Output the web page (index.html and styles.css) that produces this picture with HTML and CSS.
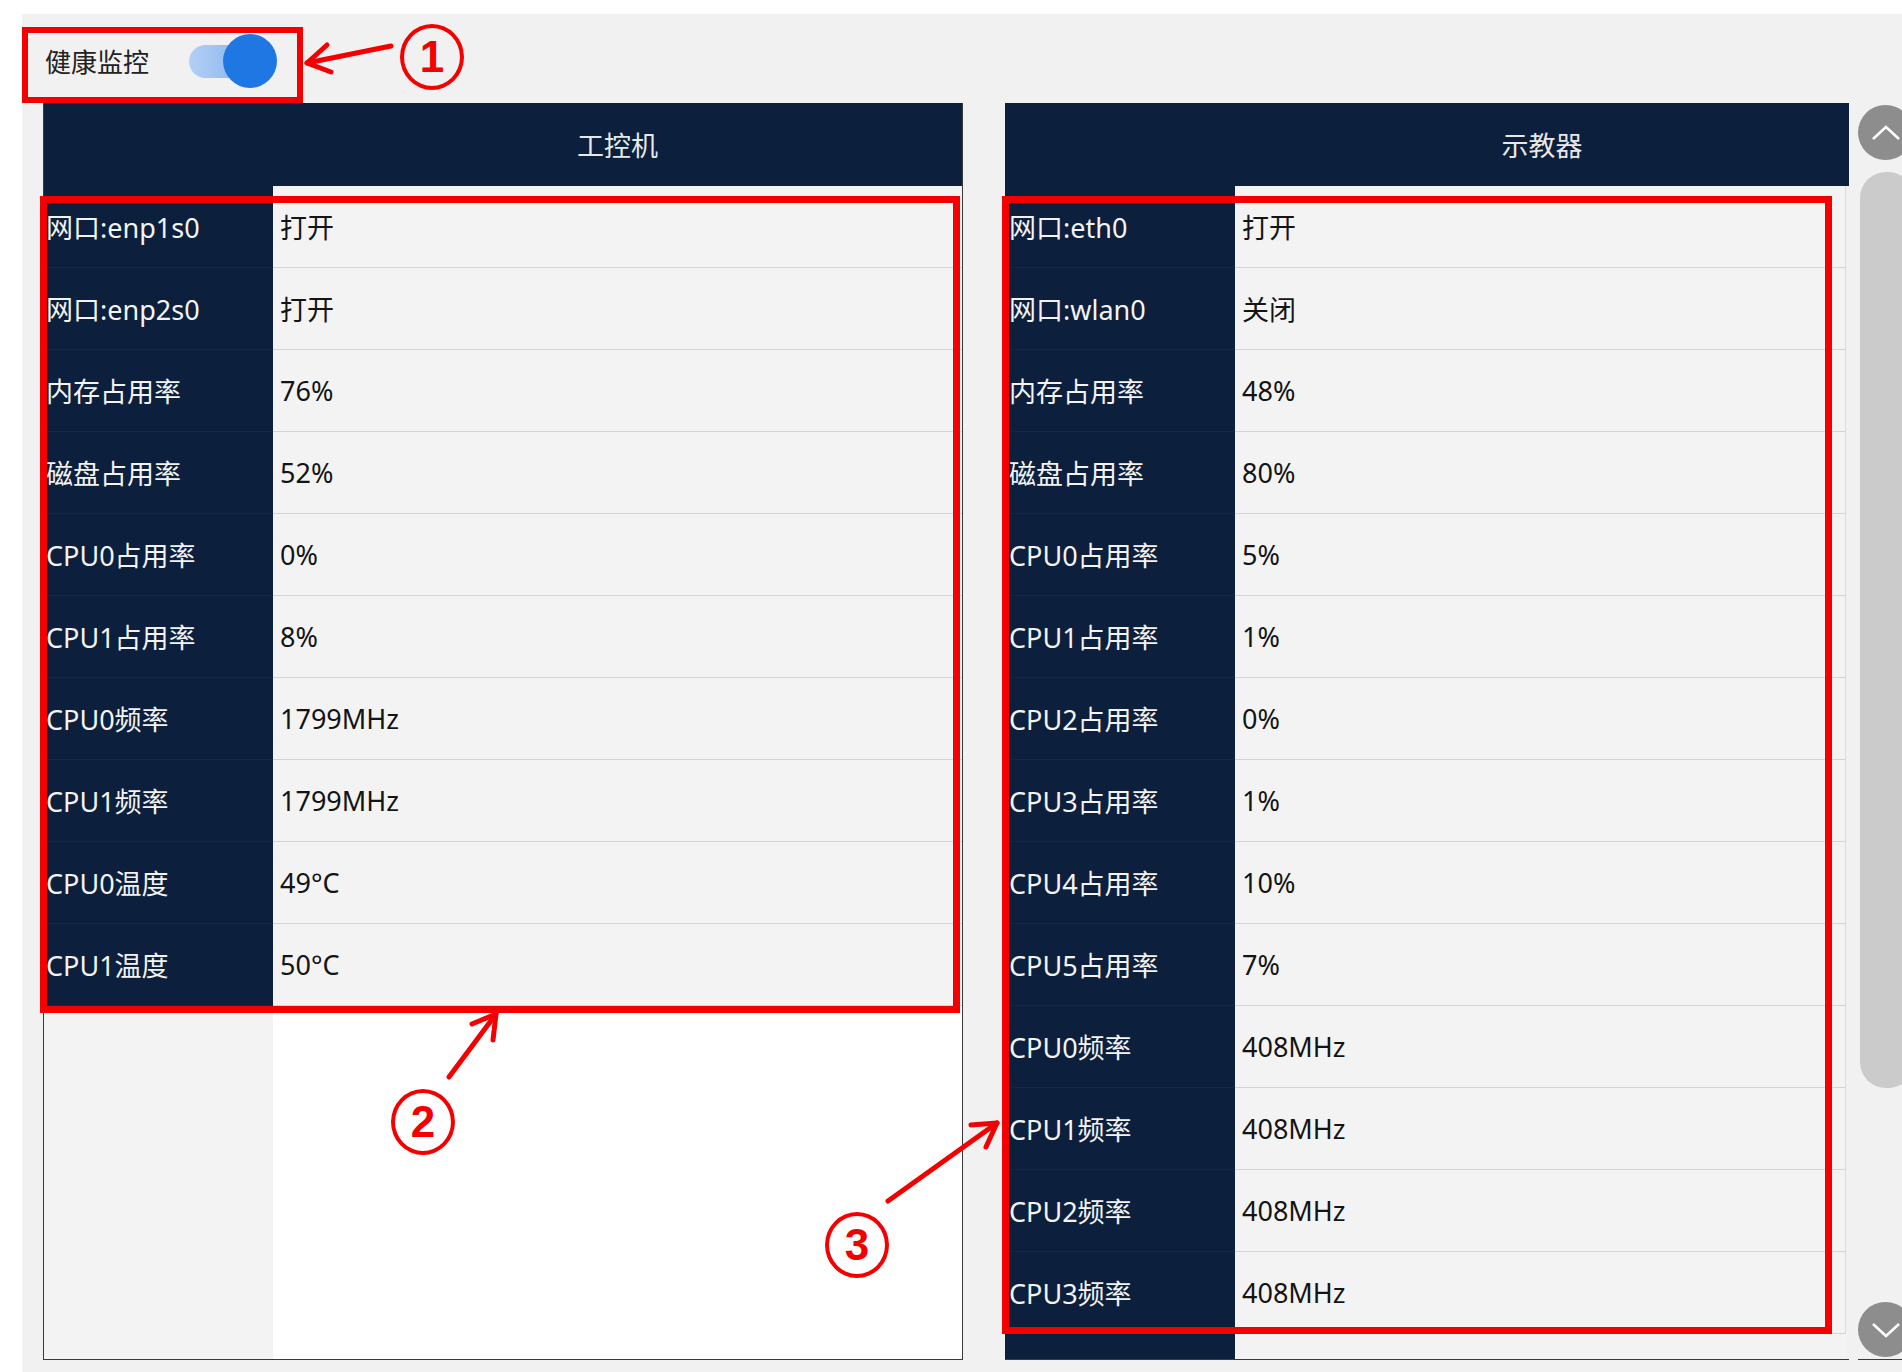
FILE: index.html
```html
<!DOCTYPE html>
<html>
<head>
  <meta charset="UTF-8">
  <title>健康监控</title>
  <link rel="stylesheet" href="styles.css">
</head>
<body>
  <div class="app">
    <div class="toolbar">
      <span class="toolbar-label">健康监控</span>
      <div class="switch">
        <div class="switch-track"></div>
        <div class="switch-knob"></div>
      </div>
    </div>

    <div class="panels">
      <!-- 工控机 -->
      <div class="panel panel-left">
        <div class="panel-header">工控机</div>
        <div class="row"><div class="row-label">网口:enp1s0</div><div class="row-value">打开</div></div>
        <div class="row"><div class="row-label">网口:enp2s0</div><div class="row-value">打开</div></div>
        <div class="row"><div class="row-label">内存占用率</div><div class="row-value">76%</div></div>
        <div class="row"><div class="row-label">磁盘占用率</div><div class="row-value">52%</div></div>
        <div class="row"><div class="row-label">CPU0占用率</div><div class="row-value">0%</div></div>
        <div class="row"><div class="row-label">CPU1占用率</div><div class="row-value">8%</div></div>
        <div class="row"><div class="row-label">CPU0频率</div><div class="row-value">1799MHz</div></div>
        <div class="row"><div class="row-label">CPU1频率</div><div class="row-value">1799MHz</div></div>
        <div class="row"><div class="row-label">CPU0温度</div><div class="row-value">49°C</div></div>
        <div class="row"><div class="row-label">CPU1温度</div><div class="row-value">50°C</div></div>
        <div class="filler">
          <div class="filler-label"></div>
          <div class="filler-value"></div>
        </div>
      </div>

      <!-- 示教器 -->
      <div class="panel panel-right">
        <div class="panel-header">示教器</div>
        <div class="row"><div class="row-label">网口:eth0</div><div class="row-value">打开</div></div>
        <div class="row"><div class="row-label">网口:wlan0</div><div class="row-value">关闭</div></div>
        <div class="row"><div class="row-label">内存占用率</div><div class="row-value">48%</div></div>
        <div class="row"><div class="row-label">磁盘占用率</div><div class="row-value">80%</div></div>
        <div class="row"><div class="row-label">CPU0占用率</div><div class="row-value">5%</div></div>
        <div class="row"><div class="row-label">CPU1占用率</div><div class="row-value">1%</div></div>
        <div class="row"><div class="row-label">CPU2占用率</div><div class="row-value">0%</div></div>
        <div class="row"><div class="row-label">CPU3占用率</div><div class="row-value">1%</div></div>
        <div class="row"><div class="row-label">CPU4占用率</div><div class="row-value">10%</div></div>
        <div class="row"><div class="row-label">CPU5占用率</div><div class="row-value">7%</div></div>
        <div class="row"><div class="row-label">CPU0频率</div><div class="row-value">408MHz</div></div>
        <div class="row"><div class="row-label">CPU1频率</div><div class="row-value">408MHz</div></div>
        <div class="row"><div class="row-label">CPU2频率</div><div class="row-value">408MHz</div></div>
        <div class="row"><div class="row-label">CPU3频率</div><div class="row-value">408MHz</div></div>
        <div class="filler filler-dark">
          <div class="filler-label"></div>
          <div class="filler-value"></div>
        </div>
      </div>

      <div class="scroller">
        <div class="scroll-btn">
          <svg width="30" height="18" viewBox="0 0 30 18"><polyline points="2,15 15,3 28,15" fill="none" stroke="#fff" stroke-width="2.5"/></svg>
        </div>
        <div class="scroll-thumb"></div>
        <div class="scroll-btn scroll-btn-down">
          <svg width="30" height="18" viewBox="0 0 30 18"><polyline points="2,3 15,15 28,3" fill="none" stroke="#fff" stroke-width="2.5"/></svg>
        </div>
      </div>
    </div>
  </div>

  <!-- red call-outs drawn on top -->
  <div class="marks">
    <div class="mark-box mark-box-1"></div>
    <div class="mark-box mark-box-2"></div>
    <div class="mark-box mark-box-3"></div>
    <div class="mark-num mark-num-1">1</div>
    <div class="mark-num mark-num-2">2</div>
    <div class="mark-num mark-num-3">3</div>
    <svg class="mark-arrows" width="1902" height="1372" viewBox="0 0 1902 1372">
      <g fill="none" stroke="#f50000" stroke-width="5" stroke-linecap="round" stroke-linejoin="round">
        <line x1="391" y1="46" x2="307" y2="63"/>
        <polyline points="331,72 307,63 327,45"/>
        <line x1="449" y1="1077" x2="496" y2="1014"/>
        <polyline points="493,1040 496,1014 472,1024"/>
        <line x1="888" y1="1201" x2="997" y2="1123"/>
        <polyline points="986,1147 997,1123 971,1125"/>
      </g>
    </svg>
  </div>
</body>
</html>
```

FILE: styles.css
```css
body {
  margin: 0;
  background: #fff;
  font-family: "Noto Sans", "Noto Sans CJK SC", sans-serif;
  position: relative;
  height: 1372px;
  overflow: hidden;
}
.app {
  margin: 14px 0 0 22px;
  background: #f1f1f1;
  height: 1358px;
  overflow: hidden;
}
.toolbar {
  height: 85px;
  padding-top: 4px;
  padding-left: 23px;
  display: flex;
  align-items: center;
  gap: 40px;
}
.toolbar-label {
  font-size: 26px;
  color: #222;
}
.switch {
  position: relative;
  width: 88px;
  height: 54px;
}
.switch-track {
  position: absolute;
  left: 0;
  top: 11px;
  width: 72px;
  height: 33px;
  border-radius: 17px;
  background: linear-gradient(90deg, #b3d0f5, #7eaeed);
}
.switch-knob {
  position: absolute;
  right: 0;
  top: 0;
  width: 54px;
  height: 54px;
  border-radius: 50%;
  background: #1f77e3;
}

.panels {
  display: flex;
  padding-left: 21px;
  height: 1257px;
}
.panel {
  display: flex;
  flex-direction: column;
  flex: none;
  font-size: 27px;
}
.panel-left {
  width: 918px;
  border: 1px solid #3a3a3a;
  border-top: 0;
  margin-right: 42px;
}
.panel-right {
  width: 844px;
  border-bottom: 1px solid #3a3a3a;
}
/* title sits over the value column */
.panel-header {
  height: 83px;
  flex: none;
  padding-left: 229px;
  background: #0c1f3c;
  color: #e8e8e8;
  display: flex;
  align-items: center;
  justify-content: center;
}
.panel-right .panel-header {
  padding-left: 230px;
}
.row {
  display: flex;
  height: 82px;
  flex: none;
}
.row-label {
  width: 227px;
  padding-left: 2px;
  background: #0c1f3c;
  color: #f3f3f3;
  display: flex;
  align-items: center;
  border-bottom: 1px solid #12284a;
}
.panel-right .row-label {
  width: 226px;
  padding-left: 4px;
}
.row-value {
  flex: 1;
  padding-left: 7px;
  background: #f3f3f3;
  color: #141414;
  display: flex;
  align-items: center;
  border-bottom: 1px solid #d4d4d4;
}
.panel-right .row-value {
  border-right: 1px solid #dcdcdc;
  margin-right: 3px;
}
.filler {
  flex: 1;
  display: flex;
}
.filler-label {
  width: 229px;
  background: #f3f3f3;
}
.filler-value {
  flex: 1;
  background: #fff;
}
.filler-dark .filler-label {
  width: 230px;
  background: #0c1f3c;
}
.filler-dark .filler-value {
  background: #f3f3f3;
  margin-right: 3px;
}

.scroller {
  width: 56px;
  flex: none;
  margin-left: 9px;
  padding-top: 2px;
  display: flex;
  flex-direction: column;
  border-bottom: 1px solid #3a3a3a;
}
.scroll-btn {
  width: 55px;
  height: 55px;
  flex: none;
  border-radius: 50%;
  background: #8d8d8d;
  display: flex;
  align-items: center;
  justify-content: center;
}
.scroll-thumb {
  height: 916px;
  flex: none;
  margin-top: 12px;
  margin-left: 2px;
  border-radius: 26px;
  background: #cbcbcb;
}
.scroll-btn-down {
  margin-top: auto;
  margin-bottom: 2px;
}

.marks {
  position: absolute;
  left: 0;
  top: 0;
  width: 1902px;
  height: 1372px;
  pointer-events: none;
}
.mark-arrows {
  position: absolute;
  left: 0;
  top: 0;
}
.mark-box {
  position: absolute;
  box-sizing: border-box;
  border: 7px solid #f50000;
}
.mark-box-1 {
  left: 22px;
  top: 27px;
  width: 281px;
  height: 76px;
  border-width: 6px;
}
.mark-box-2 {
  left: 40px;
  top: 196px;
  width: 920px;
  height: 817px;
}
.mark-box-3 {
  left: 1002px;
  top: 196px;
  width: 830px;
  height: 1138px;
}
.mark-num {
  position: absolute;
  box-sizing: border-box;
  width: 64px;
  height: 66px;
  border: 4px solid #f50000;
  border-radius: 50%;
  color: #f50000;
  font-family: "Liberation Sans", sans-serif;
  font-weight: bold;
  font-size: 44px;
  display: flex;
  align-items: center;
  justify-content: center;
}
.mark-num-1 {
  left: 400px;
  top: 24px;
}
.mark-num-2 {
  left: 391px;
  top: 1089px;
}
.mark-num-3 {
  left: 825px;
  top: 1212px;
}
```
